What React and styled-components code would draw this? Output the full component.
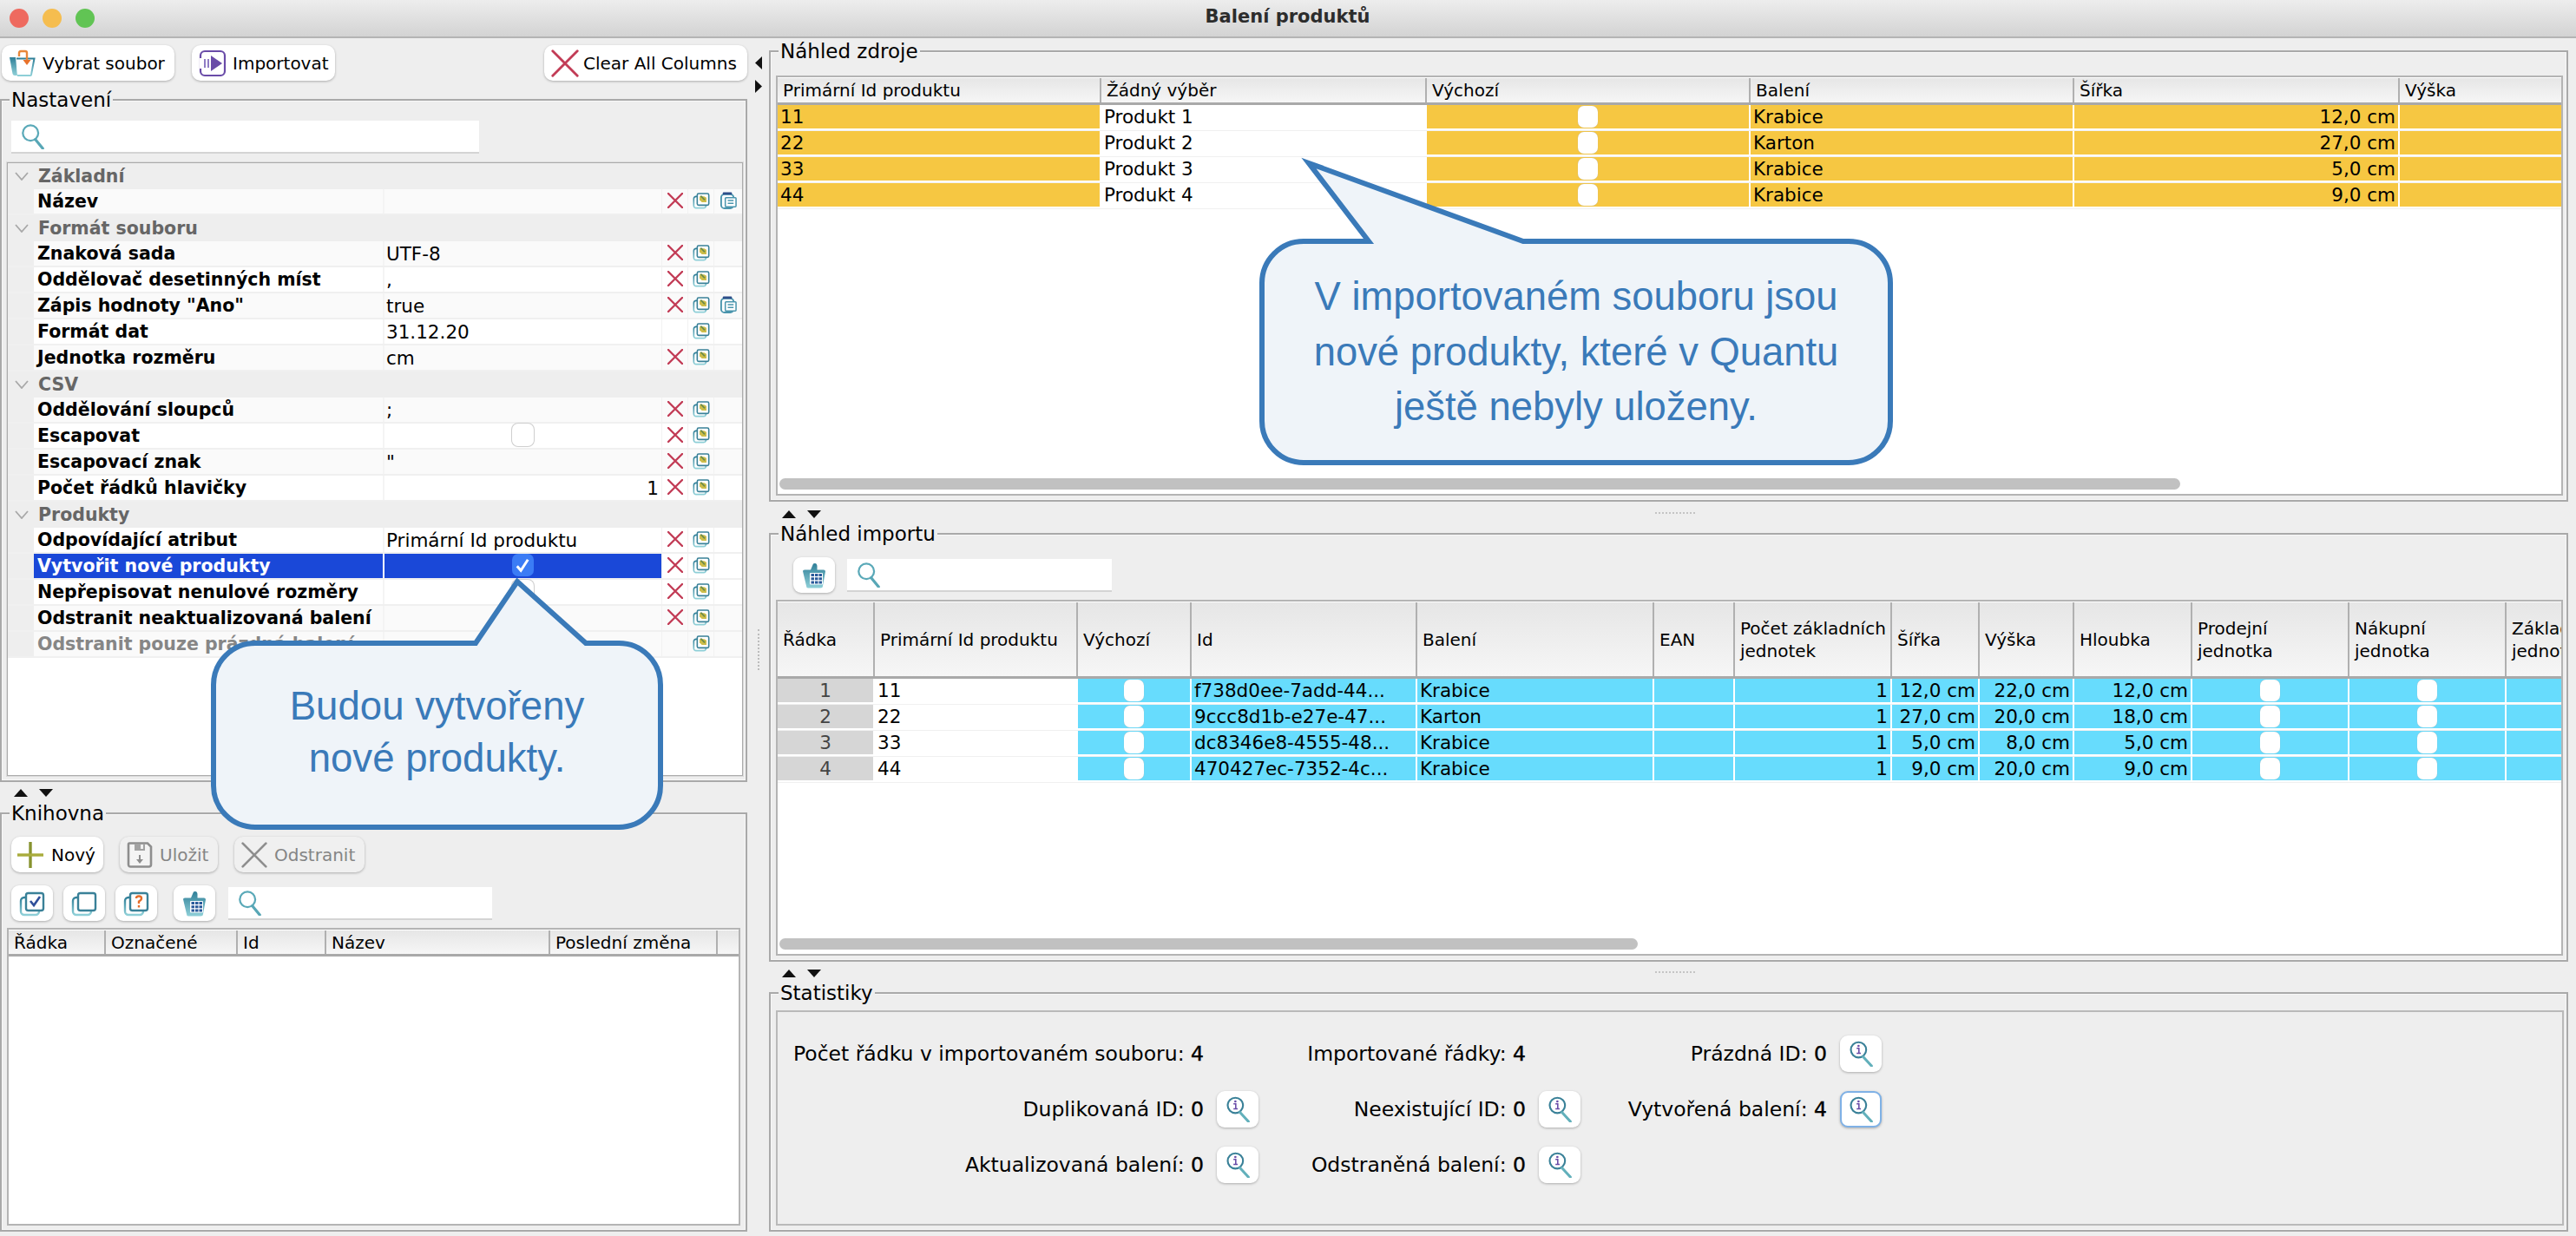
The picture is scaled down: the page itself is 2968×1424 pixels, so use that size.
import React from 'react';
import styled, { createGlobalStyle } from 'styled-components';

const Global = createGlobalStyle`
  html, body { margin: 0; padding: 0; background: #eeeeee; }
  body { font-family: "DejaVu Sans", "Noto Sans", sans-serif; color: #000; overflow: hidden; }
  * { box-sizing: border-box; }
`;

const Page = styled.div`
  position: relative; width: 2968px; height: 1424px; display: flex; flex-direction: column; background: #eeeeee; overflow: hidden;
`;
const TitleBar = styled.header`
  height: 44px; flex: none; display: grid; grid-template-columns: 1fr auto 1fr; align-items: center;
  background: linear-gradient(#ededed, #d3d3d3); border-bottom: 2px solid #b4b4b4; padding-left: 11px;
`;
const Lights = styled.div` display: flex; gap: 16px; `;
const Light = styled.span` width: 22px; height: 22px; border-radius: 50%; background: ${p => p.$c}; `;
const WindowTitle = styled.h1` margin: 0 12px 4px 0; font-size: 21px; font-weight: bold; color: #2c2c2c; `;

const Body = styled.div` flex: 1; display: flex; min-height: 0; `;
const LeftCol = styled.div` width: 861px; flex: none; display: flex; flex-direction: column; `;
const RightCol = styled.div` flex: 1; display: flex; flex-direction: column; padding-right: 9px; min-width: 0; `;
const Divider = styled.div` width: 25px; flex: none; display: flex; flex-direction: column; align-items: center; padding-top: 21px; `;
const DividerDots = styled.div` margin-top: 606px; height: 47px; border-left: 2px dotted #bcbcbc; `;
const Arrow = styled.svg` width: 8px; height: 15px; margin-bottom: 12px; display: block; `;

const Toolbar = styled.div` height: 56px; flex: none; display: flex; align-items: flex-start; padding: 8px 0 0 2px; gap: 20px; `;
const Spacer = styled.div` flex: 1; `;
const Button = styled.button`
  font: inherit; font-size: 20px; height: 41px; width: ${p => p.$w}px; flex: none; padding: 0 0 0 ${p => p.$pad || 8}px; border: 0; border-radius: 10px;
  background: ${p => p.$disabled ? '#f0f0f0' : '#fff'}; color: ${p => p.$disabled ? '#858585' : '#000'};
  box-shadow: 0 1px 3px rgba(0,0,0,.28); display: flex; align-items: center; gap: ${p => p.$gap ?? 7}px; white-space: nowrap;
`;
const IconButton = styled.button`
  width: 48px; height: ${p => p.$h || 41}px; flex: none; padding: 0; border-radius: 9px; background: #fff; display: flex; align-items: center; justify-content: center;
  margin-left: ${p => p.$ml || 0}px; border: ${p => p.$focus ? '2px solid #7fb1e6' : '0'}; box-shadow: 0 1px 3px rgba(0,0,0,.28);
`;

const Panel = styled.section`
  position: relative; margin-top: 14px; height: ${p => p.$h - 14}px; flex: none; border: 2px solid #a9a9a9; display: flex; flex-direction: column;
  padding: ${p => p.$top + 14}px 3px 5px 6px; box-shadow: inset 0 0 0 1px #f7f7f7;
`;
const Legend = styled.h2`
  position: absolute; left: 9px; top: -16px; margin: 0; padding: 0 2px; font-size: 23px; font-weight: normal; line-height: 30px; height: 30px; background: #eeeeee;
`;

const Splitter = styled.div` height: ${p => p.$h}px; flex: none; display: grid; grid-template-columns: 1fr auto 1fr; align-items: end; padding: 0 0 ${p => p.$pb ?? 4}px ${p => p.$pl ?? 16}px; `;
const SplitArrows = styled.div` display: flex; gap: 13px; `;
const SplitDots = styled.div` width: 46px; height: 3px; margin-bottom: 4px; border-top: 2px dotted #c4c4c4; `;

const Search = styled.div`
  width: ${p => p.$w}px; height: ${p => p.$h || 38}px; margin-left: ${p => p.$ml || 0}px; flex: none; background: #fff; border-bottom: 2px solid #d4d4d4;
  display: flex; align-items: center; padding-left: 10px;
`;

const PropTable = styled.div` margin-top: 10px; flex: 1; min-height: 0; border: 1px solid #ababab; background: #fff; box-shadow: 0 0 0 1px #dcdcdc; `;
const GroupRow = styled.div`
  height: 30px; background: #eeeeee; display: flex; align-items: center; padding-left: 8px; gap: 11px; font-size: 20.5px; font-weight: bold; color: #666;
`;
const PropRow = styled.div`
  height: 30px; display: grid; grid-template-columns: 30px 402px 321px 30px 30px 1fr; background: ${p => p.$alt ? '#fafafa' : '#fff'};
  border-bottom: 2px solid #f0f0f0;
`;
const Gutter = styled.div` background: #eeeeee; `;
const NameCell = styled.div`
  padding-left: 4px; display: flex; align-items: center; font-size: 20.5px; font-weight: bold; white-space: nowrap; overflow: hidden;
  color: ${p => p.$selected ? '#fff' : p.$muted ? '#868686' : '#000'}; background: ${p => p.$selected ? '#1a48d8' : 'transparent'};
`;
const ValueCell = styled.div`
  padding: 0 3px 0 2px; display: flex; align-items: center; font-size: 21.5px; white-space: nowrap; border-left: 2px solid ${p => p.$selected ? '#fff' : '#f4f4f4'};
  justify-content: ${p => p.$align || 'flex-start'}; background: ${p => p.$selected ? '#1a48d8' : 'transparent'};
`;
const ActionCell = styled.div` display: flex; align-items: center; justify-content: center; padding-bottom: 2px; border-left: 1px solid #f2f2f2; `;
const Check = styled.span`
  width: 25px; height: 26px; margin-bottom: 2px; border-radius: 7px; display: flex; align-items: center; justify-content: center;
  background: ${p => p.$on ? '#3b7cf5' : '#fff'}; box-shadow: ${p => p.$on ? 'none' : '0 0 0 1px #cfcfcf'};
`;

const ButtonRow = styled.div` display: flex; flex: none; gap: ${p => p.$gap}px; margin-bottom: ${p => p.$mb || 0}px; margin-left: ${p => p.$ml || 0}px; align-items: center; `;

const DataTable = styled.div`
  flex: 1; min-height: 0; display: flex; flex-direction: column; border: 2px solid #b4b4b4; background: #fff; overflow: hidden; margin-right: ${p => p.$mr || 0}px;
`;
const HeadRow = styled.div`
  flex: none; margin-top: 1px; height: ${p => p.$h}px; display: grid; grid-template-columns: ${p => p.$cols}; border-bottom: 3px solid #a9a9a9;
  background: linear-gradient(#e6e6e6, #f6f6f6);
`;
const HeadCell = styled.div`
  padding-left: 6px; border-right: 2px solid #b0b0b0; font-size: 20px; line-height: 26px; display: flex; align-items: center; white-space: pre-line; overflow: hidden;
  &:last-child { border-right: 0; }
`;
const Rows = styled.div` flex: 1; min-height: 0; `;
const DataRow = styled.div` height: 30px; padding-bottom: 2px; border-bottom: 1px solid #f0f0f0; display: grid; grid-template-columns: ${p => p.$cols}; `;
const DataCell = styled.div`
  background: ${p => p.$bg}; border-right: 2px solid #fff; font-size: 21.5px; padding: 0 3px; display: flex; align-items: center; white-space: nowrap; overflow: hidden;
  justify-content: ${p => p.$align || 'flex-start'}; color: ${p => p.$dim ? '#444' : '#000'};
  &:last-child { border-right: 0; }
`;
const CellCheck = styled.span` width: 23px; height: 25px; border-radius: 7px; background: #fff; box-shadow: 0 0 1px #aaa; `;
const ScrollTrack = styled.div` flex: none; height: 13px; margin: 0 0 5px 2px; `;
const ScrollThumb = styled.div` height: 100%; width: ${p => p.$w}px; border-radius: 7px; background: #c1c1c1; `;

const SearchRow = styled.div` display: flex; flex: none; align-items: center; gap: 14px; margin: 0 0 8px 20px; `;

const StatsBox = styled.div`
  flex: 1; border: 2px solid #b9b9b9; padding: 27px 0 0 20px; display: grid; grid-template-columns: 534px 371px 347px;
  grid-auto-rows: 42px; row-gap: 22px; align-content: start; justify-content: start;
`;
const Stat = styled.div` display: flex; align-items: center; justify-content: flex-end; gap: 15px; font-size: 23.5px; white-space: nowrap; padding-right: ${p => p.$bare ? 63 : 0}px; `;
const StatValue = styled.span` -webkit-text-stroke: .4px #000; `;

const CalloutWrap = styled.div`
  position: absolute; left: ${p => p.$x}px; top: ${p => p.$y}px; width: ${p => p.$w}px; height: ${p => p.$h}px;
`;
const CalloutShape = styled.svg` position: absolute; inset: 0; width: 100%; height: 100%; `;
const CalloutText = styled.div`
  position: absolute; left: ${p => p.$l}px; width: ${p => p.$tw}px; top: ${p => p.$t}px; text-align: center;
  font-family: "Liberation Sans", Arial, sans-serif; font-size: ${p => p.$fs}px; line-height: ${p => p.$lh}px; color: #3a7ab9; white-space: pre-line;
`;

const Svg = ({ s = 30, h, vb = '0 0 30 30', children }) => <svg width={s} height={h || s} viewBox={vb} style={{ flex: 'none', display: 'block' }}>{children}</svg>;
const Grad = () => (
  <defs>
    <linearGradient id="teal" x1="0" y1="0" x2="0" y2="1"><stop offset="0" stopColor="#2f7f98" /><stop offset="1" stopColor="#8fd0d8" /></linearGradient>
  </defs>
);

const TriLeft = () => <Arrow viewBox="0 0 8 15"><path d="M8 0V15L0 7.5Z" fill="#111" /></Arrow>;
const TriRight = () => <Arrow viewBox="0 0 8 15"><path d="M0 0V15L8 7.5Z" fill="#111" /></Arrow>;
const TriUp = () => <Svg s={16} h={9} vb="0 0 16 9"><path d="M8 0L16 9H0Z" fill="#111" /></Svg>;
const TriDown = () => <Svg s={16} h={9} vb="0 0 16 9"><path d="M0 0H16L8 9Z" fill="#111" /></Svg>;
const Arrows = () => <SplitArrows><TriUp /><TriDown /></SplitArrows>;

const SearchIcon = () => (
  <Svg s={30} vb="0 0 32 32">
    <circle cx="13" cy="12" r="9.5" fill="none" stroke="#5aa9b8" strokeWidth="2.4" />
    <path d="M19 20L28 31" stroke="#58a7b6" strokeWidth="3.4" strokeLinecap="round" />
  </Svg>
);
const PickIcon = () => (
  <Svg s={32} vb="0 0 32 32"><Grad />
    <path d="M1 9H8L10 30H7Q5 30 4.5 28Z" fill="url(#teal)" />
    <path d="M9 10.5H29.5L26 29Q26 30 24 30H10" fill="#fff" stroke="url(#teal)" strokeWidth="2" />
    <path d="M12 8V4Q12 2 14 2H19Q21 2 21 4V13" fill="none" stroke="#e8873a" strokeWidth="2.4" />
    <path d="M16.5 12H25.5L21 18Z" fill="#e8712a" />
  </Svg>
);
const ImportIcon = () => (
  <Svg s={32} vb="0 0 32 32">
    <rect x="2" y="2" width="28" height="28" rx="5" fill="#fff" stroke="#6a4ca8" strokeWidth="2.2" />
    <rect x="1" y="10" width="3" height="12" fill="#fff" />
    <path d="M7 11V21M11 11V21" stroke="#8f7cc4" strokeWidth="2" />
    <path d="M14 7L27 16L14 25Z" fill="#6a4ca8" />
  </Svg>
);
const XIcon = ({ s = 18, c = '#c23c56', w = 2.4 }) => (
  <Svg s={s} vb="0 0 18 18"><path d="M1 1L17 17M17 1L1 17" stroke={c} strokeWidth={w} strokeLinecap="round" /></Svg>
);
const Stack = ({ s = 30, children }) => (
  <Svg s={s} vb="0 0 30 30"><Grad />
    <rect x="2" y="8" width="21" height="20" rx="4" fill="#fff" stroke="url(#teal)" strokeWidth="2.4" />
    <rect x="8" y="3" width="20" height="20" rx="2.5" fill="#fff" stroke="#3a8198" strokeWidth="2.4" />
    {children}
  </Svg>
);
const CopyIcon = () => <Stack s={20}><path d="M12 8H20L24 10V18H16L12 14Z" fill="#cdbd4a" /><path d="M14 7L21 14" stroke="#6a8a4a" strokeWidth="2.6" /></Stack>;
const PasteIcon = () => (
  <Svg s={20} vb="0 0 21 21">
    <rect x="2" y="3" width="15" height="17" rx="4" fill="#fff" stroke="#4a95ad" strokeWidth="2" />
    <rect x="4" y="0.5" width="11" height="3" rx="1" fill="#2f4f8a" />
    <rect x="7" y="7" width="13" height="11" rx="1" fill="#fff" stroke="#4a95ad" strokeWidth="1.6" />
    <path d="M10 10.5H17M10 14H17" stroke="#4a95ad" strokeWidth="1.6" />
  </Svg>
);
const PlusIcon = () => (
  <Svg s={32} vb="0 0 32 32"><path d="M16 1V31" stroke="#87932f" strokeWidth="3.4" /><path d="M1 16H31" stroke="#a9ac3c" strokeWidth="3.4" /></Svg>
);
const FloppyIcon = () => (
  <Svg s={30} vb="0 0 30 30">
    <path d="M3 1.5H24L28 5.5V26Q28 28.5 25.5 28.5H4.5Q2 28.5 2 26V3Q2 1.5 3 1.5Z" fill="#f4f4f4" stroke="#8e8e8e" strokeWidth="2.6" />
    <rect x="9" y="2" width="12" height="8" fill="#a2a2a2" /><rect x="16" y="3" width="3" height="5" fill="#f0f0f0" />
    <path d="M15 15V23" stroke="#8e8e8e" strokeWidth="2" /><path d="M11 20H19L15 25Z" fill="#8e8e8e" />
  </Svg>
);
const TableThumb = () => (
  <Svg s={30} vb="0 0 30 30"><Grad />
    <path d="M2 10Q2 8.5 4 8.5H11L14 1.5Q18 0 18.5 4V8.5H26Q28 8.5 28 10.5L25 27Q25 29.5 22 29.5H8Q6 29.5 6 27Z" fill="url(#teal)" />
    <rect x="10" y="12" width="15" height="13.5" rx="1" fill="#fff" />
    <path d="M11.5 14.5H24M11.5 18.8H24M11.5 23H24" stroke="#2a5a9a" strokeWidth="3" />
    <path d="M15.5 13V25M20 13V25" stroke="#fff" strokeWidth="1" />
  </Svg>
);
const InfoLens = () => (
  <Svg s={30} vb="0 0 34 34">
    <circle cx="14" cy="12" r="10" fill="#fff" stroke="#3a8198" strokeWidth="2.4" />
    <circle cx="14" cy="6.8" r="1.5" fill="#6a4ca8" />
    <path d="M11.5 10H14.5V16.5M11.5 16.5H17" fill="none" stroke="#6a4ca8" strokeWidth="1.8" />
    <path d="M20 21L31 33" stroke="#62b0bb" strokeWidth="3.4" strokeLinecap="round" />
  </Svg>
);
const Chevron = () => <Svg s={16} h={10} vb="0 0 16 10"><path d="M1 1L8 9L15 1" fill="none" stroke="#a8a8a8" strokeWidth="1.8" /></Svg>;
const Tick = () => <Svg s={20} vb="0 0 16 16"><path d="M3 9L6.5 13L13 3" fill="none" stroke="#fff" strokeWidth="2.4" /></Svg>;

const rows = [
  { g: 'Základní' },
  { n: 'Název', alt: 1, x: 1, p: 1 },
  { g: 'Formát souboru' },
  { n: 'Znaková sada', v: 'UTF-8', alt: 1, x: 1 },
  { n: 'Oddělovač desetinných míst', v: ',', x: 1 },
  { n: 'Zápis hodnoty "Ano"', v: 'true', alt: 1, x: 1, p: 1 },
  { n: 'Formát dat', v: '31.12.20' },
  { n: 'Jednotka rozměru', v: 'cm', alt: 1, x: 1 },
  { g: 'CSV' },
  { n: 'Oddělování sloupců', v: ';', alt: 1, x: 1 },
  { n: 'Escapovat', c: 1, x: 1 },
  { n: 'Escapovací znak', v: '"', alt: 1, x: 1 },
  { n: 'Počet řádků hlavičky', v: '1', right: 1, x: 1 },
  { g: 'Produkty' },
  { n: 'Odpovídající atribut', v: 'Primární Id produktu', x: 1 },
  { n: 'Vytvořit nové produkty', c: 2, sel: 1, x: 1 },
  { n: 'Nepřepisovat nenulové rozměry', c: 1, x: 1 },
  { n: 'Odstranit neaktualizovaná balení', c: 1, alt: 1, x: 1 },
  { n: 'Odstranit pouze prázdná balení', muted: 1, alt: 1 },
];

const srcCols = '373px 375px 373px 373px 375px 1fr';
const impCols = '112px 234px 131px 260px 273px 93px 181px 101px 109px 136px 181px 181px 1fr';
const libCols = '112px 152px 102px 258px 193px 1fr';
const ORANGE = '#f6c742';
const BLUE = '#67dcfd';

const srcRows = [
  ['11', 'Produkt 1', 'Krabice', '12,0 cm'], ['22', 'Produkt 2', 'Karton', '27,0 cm'],
  ['33', 'Produkt 3', 'Krabice', '5,0 cm'], ['44', 'Produkt 4', 'Krabice', '9,0 cm'],
];
const impRows = [
  ['1', '11', 'f738d0ee-7add-44...', 'Krabice', '12,0 cm', '22,0 cm', '12,0 cm'],
  ['2', '22', '9ccc8d1b-e27e-47...', 'Karton', '27,0 cm', '20,0 cm', '18,0 cm'],
  ['3', '33', 'dc8346e8-4555-48...', 'Krabice', '5,0 cm', '8,0 cm', '5,0 cm'],
  ['4', '44', '470427ec-7352-4c...', 'Krabice', '9,0 cm', '20,0 cm', '9,0 cm'],
];
const impHead = ['Řádka', 'Primární Id produktu', 'Výchozí', 'Id', 'Balení', 'EAN', 'Počet základních\njednotek', 'Šířka', 'Výška', 'Hloubka', 'Prodejní\njednotka', 'Nákupní\njednotka', 'Základní\njednotka'];

const Lens = ({ focus }) => <IconButton $focus={focus} $h={42}><InfoLens /></IconButton>;

export default function App() {
  return (
    <Page>
      <Global />
      <TitleBar>
        <Lights><Light $c="#ee6a5f" /><Light $c="#f5bd4f" /><Light $c="#61c454" /></Lights>
        <WindowTitle>Balení produktů</WindowTitle>
        <div />
      </TitleBar>
      <Body>
        <LeftCol>
          <Toolbar>
            <Button $w={199}><PickIcon />Vybrat soubor</Button>
            <Button $w={165}><ImportIcon />Importovat</Button>
            <Spacer />
            <Button $w={234} $gap={5}><XIcon s={32} w={1.6} />Clear All Columns</Button>
          </Toolbar>
          <Panel $h={801} $top={9}>
            <Legend>Nastavení</Legend>
            <Search $w={539} $ml={5}><SearchIcon /></Search>
            <PropTable>
              {rows.map((r, i) => r.g ? (
                <GroupRow key={i}><Chevron />{r.g}</GroupRow>
              ) : (
                <PropRow key={i} $alt={r.alt}>
                  <Gutter />
                  <NameCell $selected={r.sel} $muted={r.muted}>{r.n}</NameCell>
                  <ValueCell $selected={r.sel} $align={r.c ? 'center' : r.right ? 'flex-end' : undefined}>
                    {r.c ? <Check $on={r.c === 2}>{r.c === 2 && <Tick />}</Check> : r.v}
                  </ValueCell>
                  <ActionCell>{r.x && <XIcon />}</ActionCell>
                  <ActionCell><CopyIcon /></ActionCell>
                  <ActionCell>{r.p && <PasteIcon />}</ActionCell>
                </PropRow>
              ))}
            </PropTable>
          </Panel>
          <Splitter $h={21}><Arrows /></Splitter>
          <Panel $h={497} $top={12}>
            <Legend>Knihovna</Legend>
            <ButtonRow $gap={19} $mb={15} $ml={5}>
              <Button $w={106} $pad={6} $gap={8}><PlusIcon />Nový</Button>
              <Button $w={113} $disabled $gap={8}><FloppyIcon />Uložit</Button>
              <Button $w={150} $disabled $gap={8}><XIcon s={30} c="#8e8e8e" w={1.6} />Odstranit</Button>
            </ButtonRow>
            <ButtonRow $gap={12} $mb={8} $ml={5}>
              <IconButton><Stack><path d="M13 12L17 17L24 7" fill="none" stroke="#2f4f9a" strokeWidth="2.6" /></Stack></IconButton>
              <IconButton><Stack /></IconButton>
              <IconButton><Stack><path d="M15 9Q15 6.5 18 6.5Q21 6.5 21 9Q21 11 18 12.5V15M18 17V19.5" fill="none" stroke="#e46d2a" strokeWidth="2.4" /></Stack></IconButton>
              <IconButton $ml={7}><TableThumb /></IconButton>
              <Search $w={304} $ml={3}><SearchIcon /></Search>
            </ButtonRow>
            <DataTable $mr={3}>
              <HeadRow $h={30} $cols={libCols}>
                {['Řádka', 'Označené', 'Id', 'Název', 'Poslední změna', ''].map((h, i) => <HeadCell key={i}>{h}</HeadCell>)}
              </HeadRow>
              <Rows />
            </DataTable>
          </Panel>
        </LeftCol>
        <Divider>
          <TriLeft /><TriRight />
          <DividerDots />
        </Divider>
        <RightCol>
          <Panel $h={534} $top={13}>
            <Legend>Náhled zdroje</Legend>
            <DataTable $mr={1}>
              <HeadRow $h={31} $cols={srcCols}>
                {['Primární Id produktu', 'Žádný výběr', 'Výchozí', 'Balení', 'Šířka', 'Výška'].map(h => <HeadCell key={h}>{h}</HeadCell>)}
              </HeadRow>
              <Rows>
                {srcRows.map(r => (
                  <DataRow key={r[0]} $cols={srcCols}>
                    <DataCell $bg={ORANGE}>{r[0]}</DataCell>
                    <DataCell $bg="#fff">{r[1]}</DataCell>
                    <DataCell $bg={ORANGE} $align="center"><CellCheck /></DataCell>
                    <DataCell $bg={ORANGE}>{r[2]}</DataCell>
                    <DataCell $bg={ORANGE} $align="flex-end">{r[3]}</DataCell>
                    <DataCell $bg={ORANGE} />
                  </DataRow>
                ))}
              </Rows>
              <ScrollTrack><ScrollThumb $w={1614} /></ScrollTrack>
            </DataTable>
          </Panel>
          <Splitter $h={22} $pl={15} $pb={3}><Arrows /><SplitDots /></Splitter>
          <Panel $h={508} $top={12}>
            <Legend>Náhled importu</Legend>
            <SearchRow>
              <IconButton><TableThumb /></IconButton>
              <Search $w={305}><SearchIcon /></Search>
            </SearchRow>
            <DataTable $mr={1}>
              <HeadRow $h={88} $cols={impCols}>
                {impHead.map(h => <HeadCell key={h}>{h}</HeadCell>)}
              </HeadRow>
              <Rows>
                {impRows.map(r => (
                  <DataRow key={r[0]} $cols={impCols}>
                    <DataCell $bg="#d6d6d6" $align="center" $dim>{r[0]}</DataCell>
                    <DataCell $bg="#fff">{r[1]}</DataCell>
                    <DataCell $bg={BLUE} $align="center"><CellCheck /></DataCell>
                    <DataCell $bg={BLUE}>{r[2]}</DataCell>
                    <DataCell $bg={BLUE}>{r[3]}</DataCell>
                    <DataCell $bg={BLUE} />
                    <DataCell $bg={BLUE} $align="flex-end">1</DataCell>
                    <DataCell $bg={BLUE} $align="flex-end">{r[4]}</DataCell>
                    <DataCell $bg={BLUE} $align="flex-end">{r[5]}</DataCell>
                    <DataCell $bg={BLUE} $align="flex-end">{r[6]}</DataCell>
                    <DataCell $bg={BLUE} $align="center"><CellCheck /></DataCell>
                    <DataCell $bg={BLUE} $align="center"><CellCheck /></DataCell>
                    <DataCell $bg={BLUE} />
                  </DataRow>
                ))}
              </Rows>
              <ScrollTrack><ScrollThumb $w={989} /></ScrollTrack>
            </DataTable>
          </Panel>
          <Splitter $h={21} $pl={15} $pb={3}><Arrows /><SplitDots /></Splitter>
          <Panel $h={290} $top={5}>
            <Legend>Statistiky</Legend>
            <StatsBox>
              <Stat $bare><span>Počet řádku v importovaném souboru: <StatValue>4</StatValue></span></Stat>
              <Stat $bare><span>Importované řádky: <StatValue>4</StatValue></span></Stat>
              <Stat><span>Prázdná ID: <StatValue>0</StatValue></span><Lens /></Stat>
              <Stat><span>Duplikovaná ID: <StatValue>0</StatValue></span><Lens /></Stat>
              <Stat><span>Neexistující ID: <StatValue>0</StatValue></span><Lens /></Stat>
              <Stat><span>Vytvořená balení: <StatValue>4</StatValue></span><Lens focus /></Stat>
              <Stat><span>Aktualizovaná balení: <StatValue>0</StatValue></span><Lens /></Stat>
              <Stat><span>Odstraněná balení: <StatValue>0</StatValue></span><Lens /></Stat>
            </StatsBox>
          </Panel>
        </RightCol>
      </Body>

      <CalloutWrap $x={238} $y={663} $w={530} $h={297}>
        <CalloutShape viewBox="238 663 530 297">
          <path d="M294 741H548L596 670L675 741H713A48 48 0 0 1 761 789V905A48 48 0 0 1 713 953H294A48 48 0 0 1 246 905V789A48 48 0 0 1 294 741Z" fill="#eff4f9" stroke="#3a7ab9" strokeWidth="6" />
        </CalloutShape>
        <CalloutText $l={8} $tw={515} $t={121} $lh={60} $fs={45.6}>{'Budou vytvořeny\nnové produkty.'}</CalloutText>
      </CalloutWrap>
      <CalloutWrap $x={1446} $y={180} $w={740} $h={360}>
        <CalloutShape viewBox="1446 180 740 360">
          <path d="M1502 278H1577L1508 188L1755 278H2130A48 48 0 0 1 2178 326V485A48 48 0 0 1 2130 533H1502A48 48 0 0 1 1454 485V326A48 48 0 0 1 1502 278Z" fill="#eff4f9" stroke="#3a7ab9" strokeWidth="6" />
        </CalloutShape>
        <CalloutText $l={8} $tw={724} $t={130} $lh={63.5} $fs={45.4}>{'V importovaném souboru jsou\nnové produkty, které v Quantu\nještě nebyly uloženy.'}</CalloutText>
      </CalloutWrap>
    </Page>
  );
}
